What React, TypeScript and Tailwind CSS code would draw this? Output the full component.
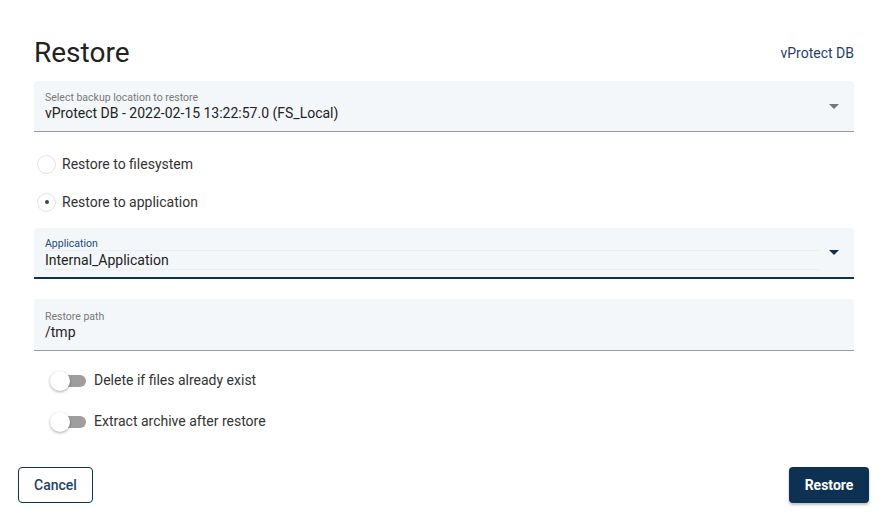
function Caret({ dark }: { dark?: boolean }) {
  return (
    <svg width="10" height="5" viewBox="0 0 10 5" className={dark ? 'fill-[#0d3152]' : 'fill-[#757575]'}>
      <path d="M0 0 L10 0 L5 5 Z" />
    </svg>
  );
}

function Radio({ label, checked }: { label: string; checked?: boolean }) {
  return (
    <div className="flex h-[38px] items-center">
      <div className="ml-[3px] flex h-[19px] w-[19px] items-center justify-center rounded-full border border-[#e3e3e3] bg-white">
        {checked && <div className="h-[4px] w-[4px] rounded-full bg-[#444]" />}
      </div>
      <span className="ml-[6px] text-[14px] text-[#333]">{label}</span>
    </div>
  );
}

function Toggle({ label }: { label: string }) {
  return (
    <div className="flex h-[41px] items-center">
      <div className="relative ml-[16px] h-[20px] w-[36px]">
        <div className="absolute left-[2px] top-[4px] h-[12px] w-[34px] rounded-full bg-[#9e9e9e]" />
        <div className="absolute left-0 top-0 h-[20px] w-[20px] rounded-full bg-white shadow-[0_1px_3px_rgba(0,0,0,0.35)]" />
      </div>
      <span className="ml-[8px] text-[14px] text-[#333]">{label}</span>
    </div>
  );
}

export default function App() {
  return (
    <div className="h-[523px] w-[888px] bg-white font-['Roboto',sans-serif]">
      <div className="px-[34px]">
        <div className="box-content flex h-[34px] items-center justify-between pt-[36px]">
          <h1 className="text-[28px] font-normal leading-[34px] text-[#222]">Restore</h1>
          <span className="text-[14px] text-[#1f3f66]">vProtect DB</span>
        </div>

        <div className="mt-[11px] flex h-[51px] items-center rounded-t-[4px] border-b border-[#9a9a9a] bg-[#f4f7fa] pl-[11px] pr-[15px]">
          <div className="flex-1 pt-[2px]">
            <div className="text-[10.5px] leading-[13px] text-[#777]">Select backup location to restore</div>
            <div className="text-[14px] leading-[19px] text-[#222]">vProtect DB - 2022-02-15 13:22:57.0 (FS_Local)</div>
          </div>
          <Caret />
        </div>

        <div className="mt-[13px]">
          <Radio label="Restore to filesystem" />
          <Radio label="Restore to application" checked />
        </div>

        <div className="mt-[7px] flex h-[51px] items-center rounded-t-[4px] border-b-2 border-[#0d3152] bg-[#f4f7fa] pl-[11px] pr-[15px]">
          <div className="flex-1 pt-[1px]">
            <div className="text-[10.5px] leading-[13px] text-[#1f4a7a]">Application</div>
            <div className="mr-[8px] border-y border-[#ebeef2] text-[14px] leading-[18px] text-[#222]">Internal_Application</div>
          </div>
          <Caret dark />
        </div>

        <div className="mt-[20px] flex h-[52px] items-center rounded-t-[4px] border-b border-[#9a9a9a] bg-[#f4f7fa] pl-[11px]">
          <div className="flex-1 pt-[2px]">
            <div className="text-[10.5px] leading-[13px] text-[#777]">Restore path</div>
            <div className="text-[14px] leading-[19px] text-[#222]">/tmp</div>
          </div>
        </div>

        <div className="mt-[9px]">
          <Toggle label="Delete if files already exist" />
          <Toggle label="Extract archive after restore" />
        </div>
      </div>

      <div className="mt-[25px] flex items-center justify-between px-[18px]">
        <button className="h-[36px] w-[75px] rounded-[4px] border border-[#0d3152] bg-white text-[14px] font-medium text-[#1f3f66]">
          Cancel
        </button>
        <button className="mr-[1px] h-[36px] w-[80px] rounded-[4px] bg-[#0d3152] text-[14px] font-bold text-white shadow-[0_2px_3px_rgba(0,0,0,0.25)]">
          Restore
        </button>
      </div>
    </div>
  );
}
